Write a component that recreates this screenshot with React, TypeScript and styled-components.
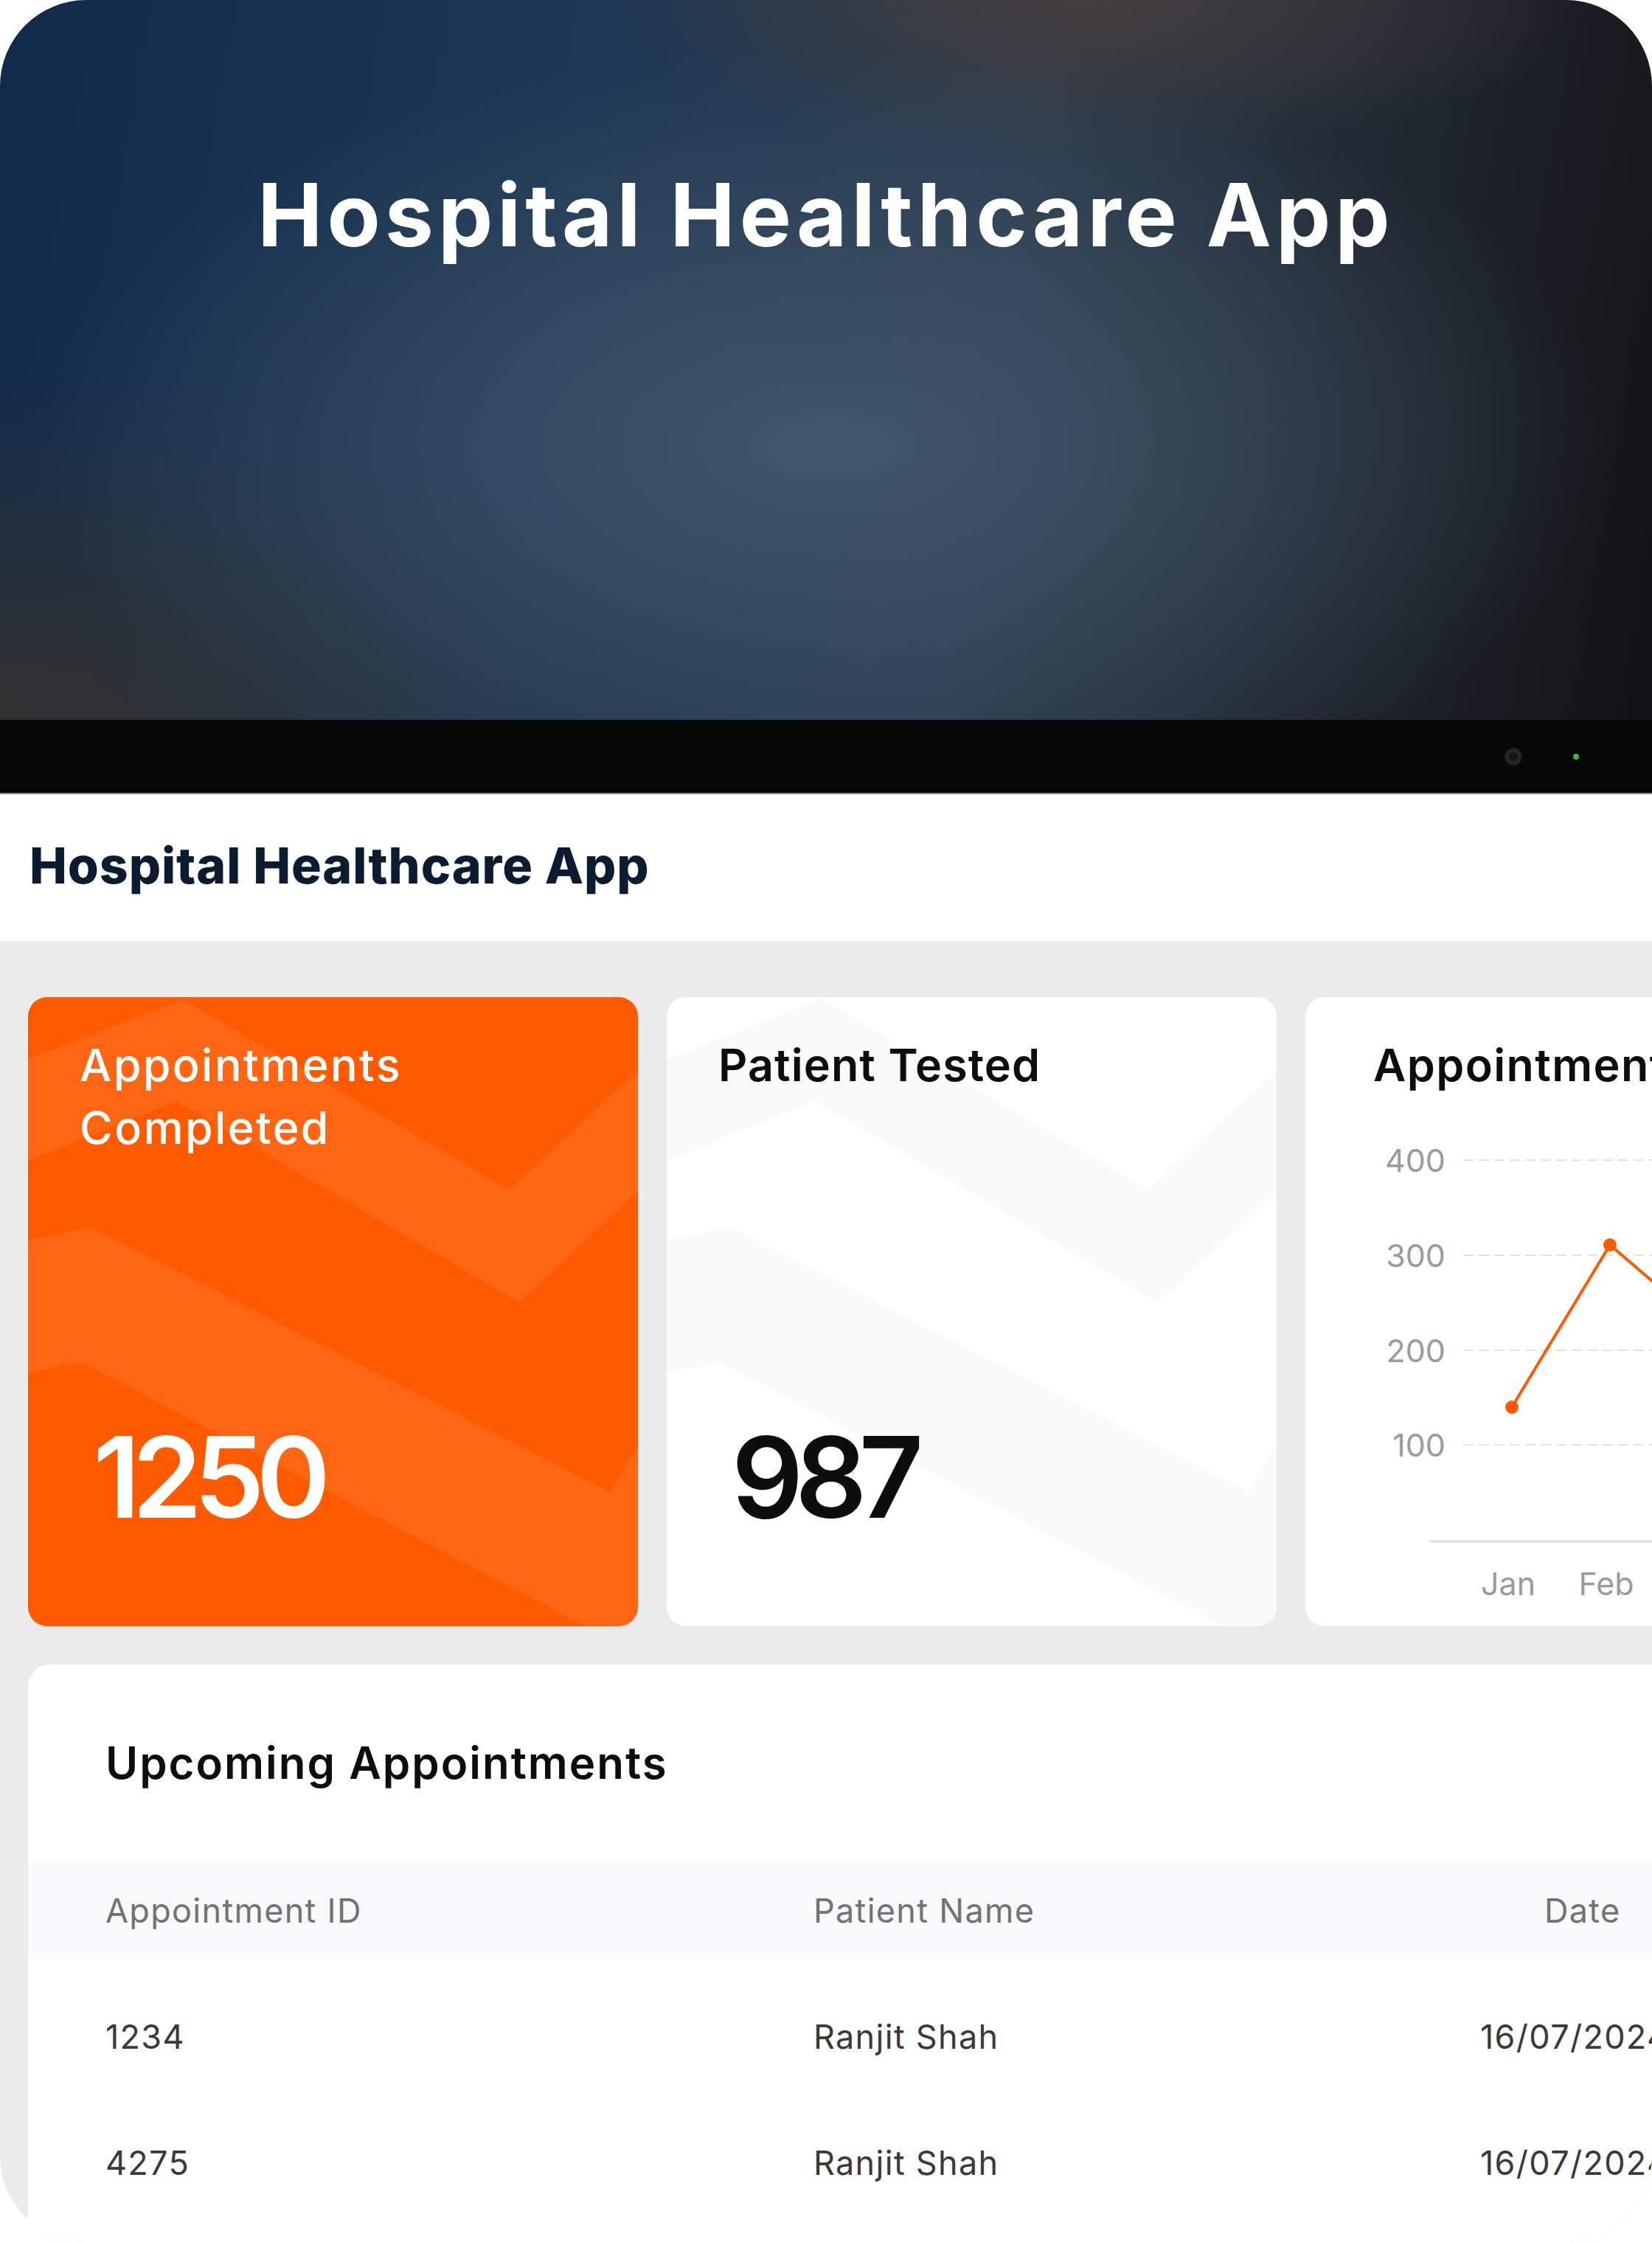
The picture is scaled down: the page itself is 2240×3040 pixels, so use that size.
import React from 'react';
import styled, { createGlobalStyle } from 'styled-components';

const GlobalStyle = createGlobalStyle`
  html, body {
    margin: 0;
    padding: 0;
    background: #ffffff;
  }
  * {
    box-sizing: border-box;
  }
`;

const Frame = styled.div`
  width: 2240px;
  height: 3040px;
  border-radius: 117px;
  overflow: hidden;
  display: flex;
  flex-direction: column;
  background: #ebebeb;
  font-family: 'Inter', 'Noto Sans', sans-serif;
`;

const Hero = styled.div`
  height: 976px;
  flex-shrink: 0;
  display: flex;
  justify-content: center;
  padding-top: 221px;
  background:
    radial-gradient(ellipse 48% 55% at 50% 62%, rgba(68, 88, 108, 0.95), rgba(68, 88, 108, 0) 100%),
    radial-gradient(ellipse 42% 48% at 0% 100%, rgba(50, 49, 48, 1), rgba(50, 49, 48, 0) 100%),
    radial-gradient(ellipse 30% 22% at 66% 0%, rgba(70, 62, 60, 0.9), rgba(70, 62, 60, 0) 100%),
    linear-gradient(100deg, #112a49 0%, #1d3855 35%, #2a3a4c 60%, #1d222a 85%, #111214 100%);
`;

const HeroTitle = styled.h1`
  margin: 0;
  font-size: 118px;
  line-height: 1.2;
  font-weight: 700;
  color: #ffffff;
  letter-spacing: 6px;
`;

const Bezel = styled.div`
  height: 101px;
  flex-shrink: 0;
  background: #070707;
  border-bottom: 2px solid #8c8c8c;
  display: flex;
  align-items: center;
  justify-content: flex-end;
  gap: 69px;
  padding-right: 99px;
`;

const Camera = styled.span`
  width: 24px;
  height: 24px;
  border-radius: 50%;
  background: radial-gradient(circle, #151515 0 30%, #2a2a2a 45%, #1c1c1c 70%, #0d0d0d 100%);
`;

const Led = styled.span`
  width: 8px;
  height: 8px;
  border-radius: 50%;
  background: #3cb844;
`;

const Header = styled.div`
  height: 199px;
  flex-shrink: 0;
  background: #ffffff;
  display: flex;
  align-items: center;
  padding: 0 0 8px 40px;
`;

const HeaderTitle = styled.h2`
  margin: 0;
  font-size: 68px;
  line-height: 1;
  font-weight: 800;
  letter-spacing: 0.9px;
  color: #0b1c31;
`;

const Body = styled.div`
  flex: 1;
  display: flex;
  flex-direction: column;
  gap: 52px;
  padding: 76px 0 0 38px;
`;

const CardsRow = styled.div`
  display: flex;
  gap: 39px;
  flex-shrink: 0;
`;

const Card = styled.div<{ $tone: 'orange' | 'white' }>`
  position: relative;
  width: 827px;
  height: 853px;
  flex-shrink: 0;
  border-radius: 26px;
  overflow: hidden;
  background: ${(p) => (p.$tone === 'orange' ? '#ff5a00' : '#ffffff')};
  color: ${(p) => (p.$tone === 'orange' ? '#ffffff' : '#0d0d0d')};
`;

const StatBody = styled.div`
  position: relative;
  height: 100%;
  display: flex;
  flex-direction: column;
  justify-content: space-between;
  padding: 50px 70px 126px;
`;

const Pattern = styled.svg`
  position: absolute;
  inset: 0;
  width: 100%;
  height: 100%;
`;

const CardTitle = styled.div<{ $indent?: number; $weight?: number; $spacing?: number }>`
  font-size: 61px;
  line-height: 85px;
  font-weight: ${(p) => p.$weight ?? 600};
  letter-spacing: ${(p) => p.$spacing ?? 1.2}px;
  padding-left: ${(p) => p.$indent ?? 0}px;
  white-space: nowrap;
`;

const StatValue = styled.div`
  font-size: 152px;
  line-height: 1;
  font-weight: 600;
  letter-spacing: -0.072em;
  padding-left: 18px;
`;

const ChartBody = styled.div`
  display: flex;
  flex-direction: column;
  padding-top: 50px;
`;

const ChartSvg = styled.svg`
  display: block;
  width: 827px;
  height: 718px;
  font-family: 'Inter', 'Noto Sans', sans-serif;
`;

const TableCard = styled.div`
  flex: 1;
  width: 2400px;
  background: #ffffff;
  border-top-left-radius: 30px;
  padding-top: 97px;
`;

const TableTitle = styled.h3`
  margin: 0 0 99px;
  padding-left: 105px;
  font-size: 60px;
  line-height: 1.2;
  font-weight: 600;
  letter-spacing: 2px;
  color: #0d0d0d;
`;

const Row = styled.div<{ $head?: boolean }>`
  display: grid;
  grid-template-columns: 960px 904px 1fr;
  align-items: center;
  height: ${(p) => (p.$head ? 131 : 171)}px;
  padding-left: 105px;
  background: ${(p) => (p.$head ? '#f8f9fa' : 'transparent')};
  color: ${(p) => (p.$head ? '#727272' : '#3a3a3a')};
  font-size: 45px;
  font-weight: 400;
  letter-spacing: 1.3px;
  margin-bottom: ${(p) => (p.$head ? 20 : 0)}px;
`;

const Cell = styled.div<{ $indent?: number }>`
  padding-left: ${(p) => p.$indent ?? 0}px;
  white-space: nowrap;
`;

const Bands = ({ fill }: { fill: string }) => (
  <Pattern viewBox="0 0 827 853" preserveAspectRatio="none">
    <polygon fill={fill} points="0,84 210,3 652,261 827,99 827,264 666,414 201,141 0,222" />
    <polygon fill={fill} points="0,330 86,312 789,671 827,606 827,853 755,853 72,495 0,510" />
  </Pattern>
);

const ticks = [
  { label: '400', y: 86 },
  { label: '300', y: 215 },
  { label: '200', y: 344 },
  { label: '100', y: 472 },
];

const points = [
  { m: 'Jan', x: 280, y: 421 },
  { m: 'Feb', x: 413, y: 201 },
  { m: 'Mar', x: 552, y: 320 },
  { m: 'Apr', x: 690, y: 253 },
];

const rows = [
  { id: '1234', name: 'Ranjit Shah', date: '16/07/2024' },
  { id: '4275', name: 'Ranjit Shah', date: '16/07/2024' },
];

export default function App() {
  return (
    <>
      <GlobalStyle />
      <Frame>
        <Hero>
          <HeroTitle>Hospital Healthcare App</HeroTitle>
        </Hero>
        <Bezel>
          <Camera />
          <Led />
        </Bezel>
        <Header>
          <HeaderTitle>Hospital Healthcare App</HeaderTitle>
        </Header>
        <Body>
          <CardsRow>
            <Card $tone="orange">
              <Bands fill="rgba(255,255,255,0.075)" />
              <StatBody>
                <CardTitle $weight={500} $spacing={2.4}>
                  Appointments
                  <br />
                  Completed
                </CardTitle>
                <StatValue>1250</StatValue>
              </StatBody>
            </Card>
            <Card $tone="white">
              <Bands fill="rgba(0,0,0,0.02)" />
              <StatBody>
                <CardTitle $spacing={1.1}>Patient Tested</CardTitle>
                <StatValue>987</StatValue>
              </StatBody>
            </Card>
            <Card $tone="white">
              <ChartBody>
                <CardTitle $indent={92} $spacing={1.4}>Appointments Overview</CardTitle>
                <ChartSvg viewBox="0 0 827 718">
                  {ticks.map((t) => (
                    <g key={t.label}>
                      <text x={190} y={t.y} textAnchor="end" dominantBaseline="central" fontSize={43} fill="#9b9b9b">
                        {t.label}
                      </text>
                      <line x1={214} x2={827} y1={t.y} y2={t.y} stroke="#e2e2e2" strokeWidth={2} strokeDasharray="14 7" />
                    </g>
                  ))}
                  <line x1={168} x2={827} y1={603} y2={603} stroke="#dedede" strokeWidth={3} />
                  {points.map((p) => (
                    <text key={p.m} x={p.x - 5} y={660} textAnchor="middle" dominantBaseline="central" fontSize={43} fill="#9b9b9b">
                      {p.m}
                    </text>
                  ))}
                  <polyline
                    points={points.map((p) => `${p.x},${p.y}`).join(' ')}
                    fill="none"
                    stroke="#ff5a00"
                    strokeWidth={4}
                  />
                  {points.map((p) => (
                    <circle key={p.m} cx={p.x} cy={p.y} r={9} fill="#ff5a00" />
                  ))}
                </ChartSvg>
              </ChartBody>
            </Card>
          </CardsRow>
          <TableCard>
            <TableTitle>Upcoming Appointments</TableTitle>
            <Row $head>
              <Cell>Appointment ID</Cell>
              <Cell>Patient Name</Cell>
              <Cell $indent={87}>Date</Cell>
            </Row>
            {rows.map((r) => (
              <Row key={r.id}>
                <Cell>{r.id}</Cell>
                <Cell>{r.name}</Cell>
                <Cell>{r.date}</Cell>
              </Row>
            ))}
          </TableCard>
        </Body>
      </Frame>
    </>
  );
}
